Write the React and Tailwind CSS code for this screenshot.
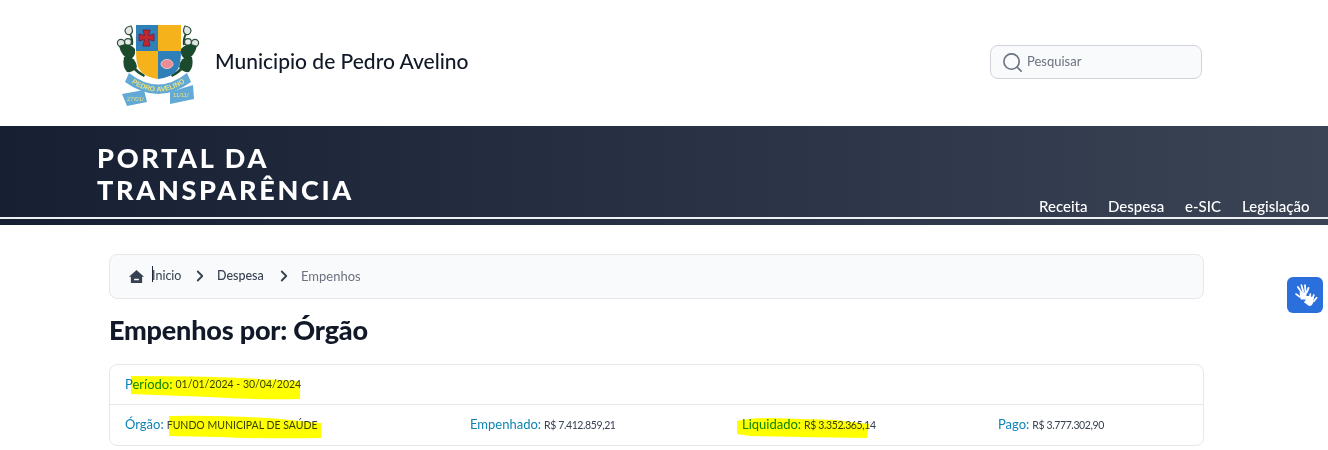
import { ChevronRight, Search } from "lucide-react";

const navLinks = [
  { label: "Receita", width: "w-[69px]" },
  { label: "Despesa", width: "w-[77px]" },
  { label: "e-SIC", width: "w-[57px]" },
  { label: "Legislação", width: "" },
];

function Leaves({ flip }) {
  return (
    <g transform={flip ? "translate(96 0) scale(-1 1)" : undefined} fill="#1c4a2c">
      <path d="M21 10 q-6 1 -6 5 q1 5 6 3 q3 -3 0 -8z" fill="#e4e8e4" stroke="#2f4f3a" strokeWidth="1.2" />
      <path d="M20 18 q3 5 2 11" stroke="#1c4a2c" strokeWidth="2" fill="none" />
      <circle cx="11" cy="27" r="3.6" fill="#dfe5e0" stroke="#2f4f3a" strokeWidth="1.2" />
      <circle cx="18" cy="26" r="3.4" fill="#e8ece8" stroke="#2f4f3a" strokeWidth="1.2" />
      <path d="M9 30 q10 -4 16 3 q1 8 -5 10 q-8 -1 -11 -13z" />
      <path d="M14 41 q11 -2 13 10 q-4 6 -10 5 q-5 -5 -3 -15z" />
      <path d="M24 50 q4 5 11 9 l-1 2 q-8 -4 -12 -9z" />
    </g>
  );
}

function CoatOfArms() {
  return (
    <svg viewBox="0 0 95 95" className="h-[95px] w-[95px] shrink-0 blur-[0.4px]">
      <Leaves />
      <Leaves flip />
      <path d="M26 9 H48 V35 H26z" fill="#2f7fb8" />
      <path d="M48 9 H71 V35 H48z" fill="#f5b21a" />
      <path d="M26 35 H48 V63 Q34 61 29 53 Q26 47 26 35z" fill="#f5b21a" />
      <path d="M48 35 H71 Q71 47 68 53 Q63 61 48 63z" fill="#2f7fb8" />
      <path
        d="M33 14 h7 l-1.5 5.5 l5.5 -1.5 v7 l-5.5 -1.5 l1.5 6.5 h-7 l1.5 -6.5 l-5.5 1.5 v-7 l5.5 1.5z"
        fill="#c2262e"
        stroke="#6d1a35"
        strokeWidth="0.8"
      />
      <ellipse cx="57" cy="48" rx="6" ry="4.5" fill="#e98d93" stroke="#f3c3c3" strokeWidth="1" />
      <path d="M19 57 Q48 80 77 57 L81 66 Q48 90 15 66z" fill="#62a9d6" />
      <path d="M12 78 L34 74 L37 86 L17 90z" fill="#62a9d6" />
      <path d="M60 76 L83 69 L84 83 L60 88z" fill="#62a9d6" />
      <path id="ribbon-line" d="M19 65 Q48 86 77 65" fill="none" />
      <text fontFamily="Liberation Sans, sans-serif" fontSize="7" fontWeight="700" fill="#e9e27a">
        <textPath href="#ribbon-line" startOffset="5%">PEDRO AVELINO</textPath>
      </text>
      <text x="17" y="85" fontFamily="Liberation Sans, sans-serif" fontSize="6" fill="#e9e27a">27/01/</text>
      <text x="63" y="81" fontFamily="Liberation Sans, sans-serif" fontSize="6" fill="#e9e27a">11/11/</text>
    </svg>
  );
}

function SignHands() {
  return (
    <svg viewBox="0 0 36 36" className="h-8 w-8 blur-[0.3px]" fill="none" stroke="#fff" strokeLinecap="round">
      <g strokeWidth="2">
        <path d="M10 9 l4 6" />
        <path d="M14 7 l2 7" />
        <path d="M18 7 l0.5 7" />
        <path d="M22 10 l-2 5" />
        <path d="M8 17 l4 3" />
      </g>
      <path d="M13 16 h6 l-1 6 h-4z" fill="#fff" strokeWidth="2" />
      <g strokeWidth="2">
        <path d="M16 20 h7" />
        <path d="M28 18 l-2 5" />
        <path d="M31 21 l-3 4" />
        <path d="M24 17 l-1 6" />
        <path d="M18 26 l3 1" />
      </g>
      <path d="M20 21 h7 l-1 6 q-1 3 -4 2 l-3 -3z" fill="#fff" strokeWidth="2" />
    </svg>
  );
}

export default function App() {
  return (
    <div className="relative h-[450px] w-[1328px] overflow-hidden bg-white font-['Lato',sans-serif] text-[#111827]">
      <header className="flex h-[126px] items-center pl-[110px] pr-[126px]">
        <CoatOfArms />
        <h1 className="mb-[4px] ml-[10px] text-[21px] font-medium text-[#111827]">Municipio de Pedro Avelino</h1>
        <div className="mb-[2px] ml-auto flex h-[34px] w-[212px] items-center rounded-lg border border-[#d1d5db] bg-[#f9fafb] pl-[10px]">
          <Search size={23} strokeWidth={1.7} className="text-[#6b7280]" />
          <span className="ml-[3px] text-[13px] text-[#6b7280]">Pesquisar</span>
        </div>
      </header>

      <div className="h-[99px] bg-gradient-to-r from-[#172033] to-[#3b4455] pb-[6px] text-white">
        <div className="flex h-full items-end border-b-2 border-[#eef0f4] pl-[97px]">
          <div className="w-[942px] self-start pt-[16px] text-[27px] font-black leading-[32px] tracking-[2.7px]">
            PORTAL DA
            <br />
            TRANSPARÊNCIA
          </div>
          <nav className="flex pb-[1px] text-[15px] font-medium leading-[20px]">
            {navLinks.map((item) => (
              <span key={item.label} className={item.width}>
                {item.label}
              </span>
            ))}
          </nav>
        </div>
      </div>

      <main className="pl-[109px] pt-[29px]">
        <div className="flex h-[45px] w-[1095px] items-center rounded-lg border border-[#e5e7eb] bg-[#f9fafb] pl-[19px] text-[12.5px]">
          <svg viewBox="0 0 16 16" className="h-[15px] w-[15px] fill-[#374151]">
            <path d="M8 1 L16 8.2 H14 V15 H2 V8.2 H0z M5.5 10.5 v1.6 h5 v-1.6z" fillRule="evenodd" />
          </svg>
          <span className="relative ml-[8px] w-[35px] text-[#374151]">
            Inicio
            <span className="absolute left-0 top-[-1px] h-[16px] w-px bg-[#1f2937]" />
          </span>
          <ChevronRight size={18} strokeWidth={2.4} className="ml-[4px] mb-[1px] text-[#374151]" />
          <span className="ml-[8px] w-[58px] font-medium text-[#374151]">Despesa</span>
          <ChevronRight size={18} strokeWidth={2.4} className="mb-[1px] text-[#374151]" />
          <span className="ml-[8px] text-[13px] text-[#6b7280]">Empenhos</span>
        </div>

        <h2 className="mt-[13px] text-[27px] font-black leading-[36px] tracking-[-0.2px] text-[#111827]">
          Empenhos por: Órgão
        </h2>

        <div className="relative mt-[16px] w-[1095px] rounded-lg border border-[#e5e7eb] text-[13px] text-[#0e84b4]">
          <div className="flex h-[40px] items-center border-b border-[#e5e7eb] pl-[15px]">
            Período:<span className="ml-[3px] text-[10.5px] text-[#374151]">01/01/2024 - 30/04/2024</span>
          </div>
          <div className="flex h-[40px] items-center pl-[15px]">
            <span className="w-[345px]">
              Órgão:<span className="ml-[3px] text-[10.5px] text-[#374151]">FUNDO MUNICIPAL DE SAÚDE</span>
            </span>
            <span className="w-[272px]">
              Empenhado:<span className="ml-[3px] text-[10.5px] tracking-[-0.4px] text-[#374151]">R$ 7.412.859,21</span>
            </span>
            <span className="w-[256px]">
              Liquidado:<span className="ml-[3px] text-[10.5px] tracking-[-0.4px] text-[#374151]">R$ 3.352.365,14</span>
            </span>
            <span>
              Pago:<span className="ml-[3px] text-[10.5px] tracking-[-0.4px] text-[#374151]">R$ 3.777.302,90</span>
            </span>
          </div>

          {/* marca-texto desenhado por cima do print */}
          <svg
            viewBox="0 0 1095 82"
            className="pointer-events-none absolute left-0 top-0 h-[82px] w-[1095px] mix-blend-multiply"
            fill="#ffff00"
          >
            <path d="M21 11 Q90 11 130 13 L190 16 L190 34 Q140 35 100 32 L21 29z" />
            <path d="M59 51 Q120 50 170 54 L211 58 L211 73 Q150 74 110 72 L59 71z" />
            <path d="M627 56 Q640 53 660 53 L725 55 L759 59 L757 73 Q700 72 640 71 L627 69z" />
          </svg>
        </div>
      </main>

      <div className="absolute left-[1287px] top-[277px] flex h-9 w-9 items-center justify-center rounded-md bg-[#2a6fdc]">
        <SignHands />
      </div>
    </div>
  );
}
